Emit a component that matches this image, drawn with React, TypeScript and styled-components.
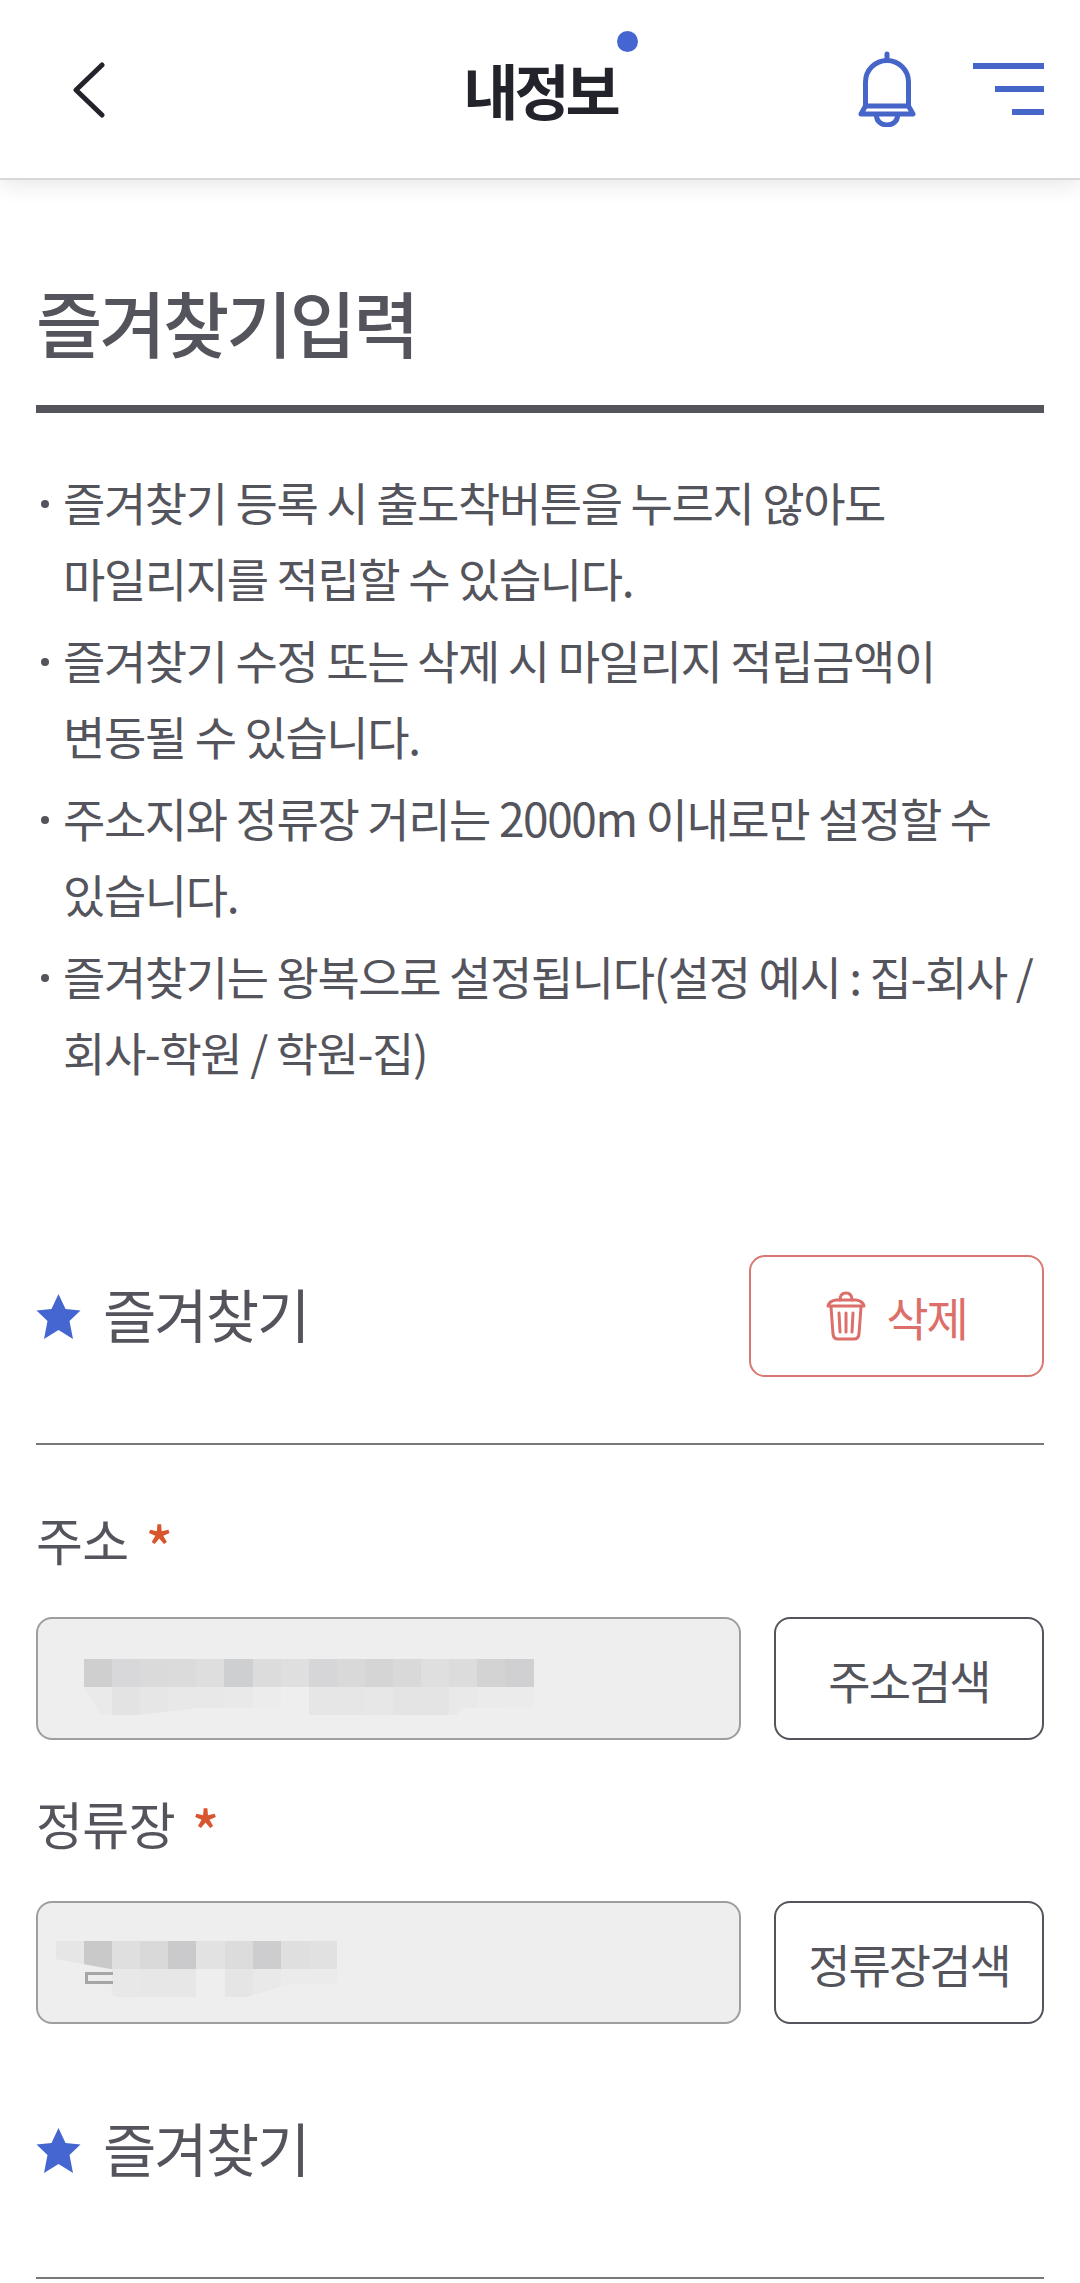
import React from "react";
import styled, { createGlobalStyle } from "styled-components";

const GlobalStyle = createGlobalStyle`
  html, body {
    margin: 0;
    padding: 0;
    background: #ffffff;
  }
  body {
    font-family: "Noto Sans CJK KR", "Noto Sans", sans-serif;
    color: #54545c;
    overflow: hidden;
  }
`;

const Page = styled.div`
  width: 1080px;
  height: 2283px;
  background: #ffffff;
  overflow: hidden;
`;

const TopBar = styled.header`
  display: grid;
  grid-template-columns: 1fr auto 1fr;
  align-items: center;
  height: 178px;
  padding: 0 36px;
  background: #ffffff;
  border-bottom: 2px solid #d8d8d8;
  box-shadow: 0 6px 20px rgba(0, 0, 0, 0.09);
`;

const BackIcon = styled.svg`
  display: block;
  width: 34px;
  height: 58px;
  margin-left: 36px;
`;

const TopTitle = styled.h1`
  position: relative;
  margin: 0;
  font-size: 60px;
  line-height: 70px;
  font-weight: 700;
  letter-spacing: -4px;
  color: #22232b;
`;

const TitleDot = styled.span`
  position: absolute;
  top: -23px;
  right: -21px;
  width: 21px;
  height: 21px;
  border-radius: 50%;
  background: #4565d1;
`;

const TopActions = styled.div`
  display: flex;
  justify-content: flex-end;
  align-items: center;
  gap: 57px;
`;

const BellIcon = styled.svg`
  display: block;
  width: 58px;
  height: 76px;
`;

const MenuIcon = styled.div`
  display: flex;
  flex-direction: column;
  align-items: flex-end;
  gap: 17px;
`;

const MenuBar = styled.span<{ $width: number }>`
  display: block;
  width: ${(p) => p.$width}px;
  height: 6px;
  background: #4565c9;
`;

const Main = styled.main`
  padding: 0 36px;
`;

const PageTitle = styled.h2`
  margin: 0;
  padding-top: 98px;
  height: 127px;
  font-size: 72px;
  line-height: 86px;
  font-weight: 500;
  letter-spacing: -2.8px;
  color: #54545c;
  border-bottom: 8px solid #54545c;
  box-sizing: content-box;
`;

const NoticeList = styled.ul`
  list-style: none;
  margin: 50px 0 0;
  padding: 0;
  display: flex;
  flex-direction: column;
  gap: 6px;
`;

const NoticeItem = styled.li`
  display: flex;
  font-size: 46px;
  line-height: 76px;
  font-weight: 400;
  letter-spacing: -1.4px;
  white-space: nowrap;
`;

const Bullet = styled.span`
  flex: none;
  width: 8px;
  height: 8px;
  margin: 37px 14px 0 5px;
  border-radius: 50%;
  background: #54545c;
`;

const Section = styled.section<{ $gap: number }>`
  margin-top: ${(p) => p.$gap}px;
`;

const SectionHead = styled.div`
  display: flex;
  align-items: center;
  justify-content: space-between;
  height: 122px;
  padding-bottom: 66px;
  border-bottom: 2px solid #77777c;
  box-sizing: content-box;
`;

const SectionName = styled.div`
  display: flex;
  align-items: center;
  gap: 22px;
  font-size: 58px;
  line-height: 70px;
  letter-spacing: -2px;
`;

const SectionText = styled.span`
  margin-top: -6px;
`;

const StarIcon = styled.svg`
  display: block;
  width: 45px;
  height: 45px;
`;

const DeleteButton = styled.button`
  display: flex;
  align-items: center;
  justify-content: center;
  gap: 20px;
  width: 295px;
  height: 122px;
  padding: 0;
  background: #ffffff;
  border: 2px solid #d97872;
  border-radius: 16px;
  font-family: inherit;
  font-size: 46px;
  letter-spacing: -2px;
  color: #dc6f6a;
`;

const TrashIcon = styled.svg`
  display: block;
  width: 40px;
  height: 50px;
`;

const FieldLabel = styled.div<{ $top: number }>`
  display: flex;
  gap: 17px;
  margin: ${(p) => p.$top}px 0 43px;
  font-size: 51px;
  line-height: 70px;
  letter-spacing: -0.6px;
`;

const Required = styled.span`
  height: 60px;
  margin-top: 6px;
  color: #d9552d;
  font-size: 56px;
  line-height: 70px;
  font-weight: 500;
`;

const FieldRow = styled.div`
  display: flex;
  justify-content: space-between;
`;

const AddressBox = styled.div<{ $left: number; $top: number }>`
  position: relative;
  box-sizing: border-box;
  width: 705px;
  height: 123px;
  padding: ${(p) => p.$top}px 0 0 ${(p) => p.$left}px;
  background: #eeeeee;
  border: 2px solid #9e9e9e;
  border-radius: 16px;
`;

const MosaicRow = styled.div<{ $shape?: string }>`
  display: flex;
  height: 28px;
  clip-path: ${(p) => p.$shape ?? "none"};
`;

const MosaicCell = styled.span<{ $tone: string }>`
  display: block;
  width: 28.1px;
  height: 100%;
  background: ${(p) => p.$tone};
`;

/* end of a glyph that the blur in the reference leaves uncovered */
const GlyphScrap = styled.span`
  position: absolute;
  left: 47px;
  top: 69px;
  box-sizing: border-box;
  width: 28px;
  height: 12px;
  border: 3px solid #a6a6a6;
  border-right: none;
`;

const SearchButton = styled.button`
  box-sizing: border-box;
  width: 270px;
  height: 123px;
  padding: 0;
  background: #ffffff;
  border: 2px solid #54545c;
  border-radius: 16px;
  font-family: inherit;
  font-size: 46px;
  letter-spacing: -2px;
  color: #54545c;
`;

const notices = [
  ["즐겨찾기 등록 시 출도착버튼을 누르지 않아도", "마일리지를 적립할 수 있습니다."],
  ["즐겨찾기 수정 또는 삭제 시 마일리지 적립금액이", "변동될 수 있습니다."],
  ["주소지와 정류장 거리는 2000m 이내로만 설정할 수", "있습니다."],
  ["즐겨찾기는 왕복으로 설정됩니다(설정 예시 : 집-회사 /", "회사-학원 / 학원-집)"],
];

const addressTop = ["#cfcfcf", "#d8d8da", "#dadada", "#dbdbdb", "#dedede", "#cecfd0", "#dcdcdc", "#dfdfdf", "#d6d6d8", "#d9d9d9", "#d5d5d5", "#d9d9d9", "#dfdfdf", "#dcdcdc", "#d3d3d3", "#d0d0d2"];
const addressBottom = ["#eaeaea", "#e3e3e3", "#e6e6e6", "#e8e8e8", "#e8e8e8", "#e9e9e9", "#ececec", "#eeeeee", "#e6e6e6", "#e6e6e6", "#e7e7e7", "#e4e4e4", "#e4e4e4", "#e9e9e9", "#ebebeb", "#ebebeb"];
const stopTop = ["#e6e6e6", "#c9c9ca", "#dfdfdf", "#d9d9d9", "#cacacc", "#e2e2e2", "#dcdcdc", "#cdcdcf", "#dfdfdf", "#e1e1e1"];
const stopBottom = ["#ededed", "#ededed", "#e8e8e8", "#e7e7e7", "#e7e7e7", "#eeeeee", "#e5e5e5", "#e9e9e9", "#ebebeb", "#ebebeb"];

const Mosaic = ({ tones, shape }: { tones: string[]; shape?: string }) => (
  <MosaicRow $shape={shape}>
    {tones.map((tone, i) => (
      <MosaicCell key={i} $tone={tone} />
    ))}
  </MosaicRow>
);

const Star = () => (
  <StarIcon viewBox="0 0 45 45">
    <path d="M22.5 0 L29.5 15 L44.5 16.5 L33.5 27 L37 45 L22.5 36 L8 45 L11.5 27 L0.5 16.5 L15.5 15 Z" fill="#4565d1" />
  </StarIcon>
);

export default function App() {
  return (
    <Page>
      <GlobalStyle />
      <TopBar>
        <BackIcon viewBox="0 0 34 58" fill="none">
          <path d="M30 5 L4 30 L30 55" stroke="#22232b" strokeWidth="5" strokeLinecap="round" strokeLinejoin="round" />
        </BackIcon>
        <TopTitle>
          내정보
          <TitleDot />
        </TopTitle>
        <TopActions>
          <BellIcon viewBox="0 0 58 76" fill="none" stroke="#4565c9" strokeWidth="5" strokeLinecap="round" strokeLinejoin="round">
            <path d="M29 3 V8" />
            <path d="M7.5 55 V31 A21.5 21.5 0 0 1 50.5 31 V55" />
            <path d="M7.5 55 H50.5 L55 63 H3 Z" />
            <path d="M18.5 65 A10.5 9 0 0 0 39.5 65" />
          </BellIcon>
          <MenuIcon>
            <MenuBar $width={71} />
            <MenuBar $width={49} />
            <MenuBar $width={32} />
          </MenuIcon>
        </TopActions>
      </TopBar>

      <Main>
        <PageTitle>즐겨찾기입력</PageTitle>

        <NoticeList>
          {notices.map((lines) => (
            <NoticeItem key={lines[0]}>
              <Bullet />
              <div>
                {lines[0]}
                <br />
                {lines[1]}
              </div>
            </NoticeItem>
          ))}
        </NoticeList>

        <Section $gap={166}>
          <SectionHead>
            <SectionName>
              <Star />
              <SectionText>즐겨찾기</SectionText>
            </SectionName>
            <DeleteButton>
              <TrashIcon viewBox="0 0 40 50" fill="none" stroke="#dc6f6a" strokeWidth="3" strokeLinecap="round" strokeLinejoin="round">
                <path d="M14 9 Q14 2 20 2 Q26 2 26 9" />
                <path d="M2 15 Q3 10 10 9 H30 Q37 10 38 15 Z" />
                <path d="M5 16 L7 43 Q7.5 48 12 48 H28 Q32.5 48 33 43 L35 16" />
                <path d="M13 22 L14 41 M20 22 V41 M27 22 L26 41" />
              </TrashIcon>
              삭제
            </DeleteButton>
          </SectionHead>

          <FieldLabel $top={59}>
            주소
            <Required>*</Required>
          </FieldLabel>
          <FieldRow>
            <AddressBox $left={46} $top={40}>
              <Mosaic tones={addressTop} />
              <Mosaic
                tones={addressBottom}
                shape="polygon(0 0, 100% 0, 100% 15px, 413px 21px, 378px 21px, 373px 28px, 225px 28px, 225px 21px, 113px 21px, 56px 28px, 16px 28px, 8px 12px, 0 0)"
              />
            </AddressBox>
            <SearchButton>주소검색</SearchButton>
          </FieldRow>

          <FieldLabel $top={48}>
            정류장
            <Required>*</Required>
          </FieldLabel>
          <FieldRow>
            <AddressBox $left={18} $top={38}>
              <Mosaic tones={stopTop} shape="polygon(0 0, 100% 0, 100% 100%, 54px 100%, 0 18px)" />
              <Mosaic
                tones={stopBottom}
                shape="polygon(40px 0, 100% 0, 100% 15px, 235px 15px, 190px 28px, 60px 28px, 42px 18px)"
              />
              <GlyphScrap />
            </AddressBox>
            <SearchButton>정류장검색</SearchButton>
          </FieldRow>
        </Section>

        <Section $gap={65}>
          <SectionHead>
            <SectionName>
              <Star />
              <SectionText>즐겨찾기</SectionText>
            </SectionName>
          </SectionHead>
        </Section>
      </Main>
    </Page>
  );
}
